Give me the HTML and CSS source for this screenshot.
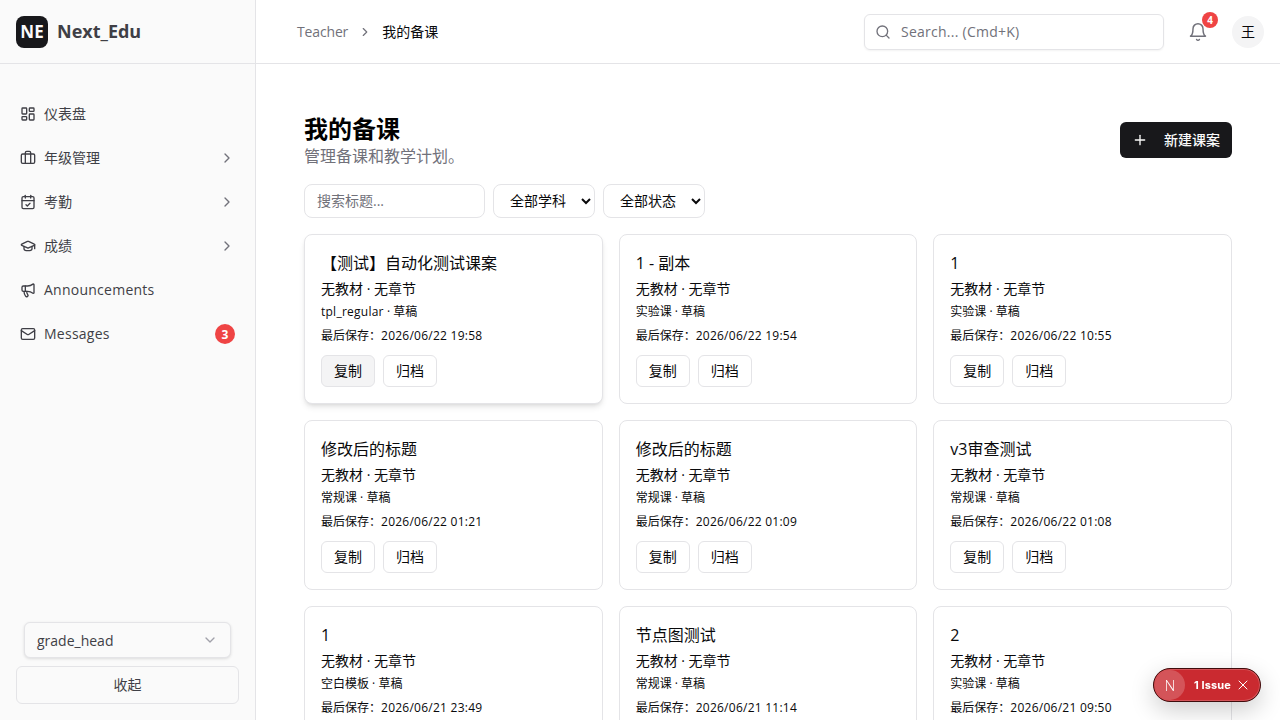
FILE: index.html
```html
<!DOCTYPE html>
<html lang="zh-CN">
<head>
  <meta charset="UTF-8" />
  <title>Next_Edu</title>
  <link rel="stylesheet" href="styles.css">
</head>
<body>
  <!-- Sidebar -->
  <aside class="sidebar">
    <div class="brand">
      <span class="brand-logo">NE</span>
      <span class="brand-name">Next_Edu</span>
    </div>
    <nav class="side-nav">
      <a class="nav-item" href="#">
        <svg class="icon" viewBox="0 0 24 24"><rect x="3" y="3" width="7" height="9" rx="1"/><rect x="14" y="3" width="7" height="5" rx="1"/><rect x="14" y="12" width="7" height="9" rx="1"/><rect x="3" y="16" width="7" height="5" rx="1"/></svg>
        <span class="nav-label">仪表盘</span>
      </a>
      <a class="nav-item" href="#">
        <svg class="icon" viewBox="0 0 24 24"><path d="M16 20V4a2 2 0 0 0-2-2h-4a2 2 0 0 0-2 2v16"/><rect x="2" y="6" width="20" height="14" rx="2"/></svg>
        <span class="nav-label">年级管理</span>
        <svg class="icon chevron" viewBox="0 0 24 24"><path d="m9 18 6-6-6-6"/></svg>
      </a>
      <a class="nav-item" href="#">
        <svg class="icon" viewBox="0 0 24 24"><path d="M8 2v4"/><path d="M16 2v4"/><rect x="3" y="4" width="18" height="18" rx="2"/><path d="M3 10h18"/><path d="m9 16 2 2 4-4"/></svg>
        <span class="nav-label">考勤</span>
        <svg class="icon chevron" viewBox="0 0 24 24"><path d="m9 18 6-6-6-6"/></svg>
      </a>
      <a class="nav-item" href="#">
        <svg class="icon" viewBox="0 0 24 24"><path d="M21.42 10.92a1 1 0 0 0-.02-1.84L12.83 5.18a2 2 0 0 0-1.66 0L2.6 9.08a1 1 0 0 0 0 1.83l8.57 3.91a2 2 0 0 0 1.66 0z"/><path d="M22 10v6"/><path d="M6 12.5V16a6 3 0 0 0 12 0v-3.5"/></svg>
        <span class="nav-label">成绩</span>
        <svg class="icon chevron" viewBox="0 0 24 24"><path d="m9 18 6-6-6-6"/></svg>
      </a>
      <a class="nav-item" href="#">
        <svg class="icon" viewBox="0 0 24 24"><path d="M11 6a13 13 0 0 0 8.4-2.8A1 1 0 0 1 21 4v12a1 1 0 0 1-1.6.8A13 13 0 0 0 11 14H5a2 2 0 0 1-2-2V8a2 2 0 0 1 2-2z"/><path d="M6 14a12 12 0 0 0 2.4 7.2 2 2 0 0 0 3.2-2.4A8 8 0 0 1 10 14"/><path d="M8 6v8"/></svg>
        <span class="nav-label latin">Announcements</span>
      </a>
      <a class="nav-item" href="#">
        <svg class="icon" viewBox="0 0 24 24"><rect x="2" y="4" width="20" height="16" rx="2"/><path d="m22 7-8.97 5.7a1.94 1.94 0 0 1-2.06 0L2 7"/></svg>
        <span class="nav-label latin">Messages</span>
        <span class="nav-badge">3</span>
      </a>
    </nav>
    <div class="side-foot">
      <div class="role-select">
        <span>grade_head</span>
        <svg class="icon role-arrow" viewBox="0 0 24 24"><path d="m6 9 6 6 6-6"/></svg>
      </div>
      <button class="collapse-btn">收起</button>
    </div>
  </aside>

  <div class="main">
    <!-- Top bar -->
    <header class="topbar">
      <div class="crumbs">
        <span class="crumb-parent">Teacher</span>
        <svg class="icon crumb-sep" viewBox="0 0 24 24"><path d="m9 18 6-6-6-6"/></svg>
        <span class="crumb-current">我的备课</span>
      </div>
      <div class="top-search">
        <svg class="icon" viewBox="0 0 24 24"><circle cx="11" cy="11" r="8"/><path d="m21 21-4.3-4.3"/></svg>
        <span class="latin">Search... (Cmd+K)</span>
      </div>
      <div class="bell">
        <svg class="icon bell-icon" viewBox="0 0 24 24"><path d="M6 8a6 6 0 0 1 12 0c0 7 3 9 3 9H3s3-2 3-9"/><path d="M10.3 21a1.94 1.94 0 0 0 3.4 0"/></svg>
        <span class="bell-badge">4</span>
      </div>
      <div class="avatar">王</div>
    </header>

    <!-- Page content -->
    <main class="content">
      <div class="page-head">
        <div>
          <h1>我的备课</h1>
          <p class="subtitle">管理备课和教学计划。</p>
        </div>
        <button class="new-btn">
          <svg class="icon" viewBox="0 0 24 24"><path d="M5 12h14"/><path d="M12 5v14"/></svg>
          <span>新建课案</span>
        </button>
      </div>

      <div class="filters">
        <input class="filter-input" type="text" placeholder="搜索标题...">
        <select class="filter-select"><option>全部学科</option></select>
        <select class="filter-select"><option>全部状态</option></select>
      </div>

      <div class="card-grid">
        <div class="card card-hover">
          <h3>【测试】自动化测试课案</h3>
          <p class="meta">无教材 · 无章节</p>
          <p class="kind"><span class="latin">tpl_regular</span> · 草稿</p>
          <p class="saved">最后保存：<span class="latin">2026/06/22 19:58</span></p>
          <div class="actions"><button class="btn btn-hover">复制</button><button class="btn">归档</button></div>
        </div>
        <div class="card">
          <h3>1 - 副本</h3>
          <p class="meta">无教材 · 无章节</p>
          <p class="kind">实验课 · 草稿</p>
          <p class="saved">最后保存：<span class="latin">2026/06/22 19:54</span></p>
          <div class="actions"><button class="btn">复制</button><button class="btn">归档</button></div>
        </div>
        <div class="card">
          <h3>1</h3>
          <p class="meta">无教材 · 无章节</p>
          <p class="kind">实验课 · 草稿</p>
          <p class="saved">最后保存：<span class="latin">2026/06/22 10:55</span></p>
          <div class="actions"><button class="btn">复制</button><button class="btn">归档</button></div>
        </div>
        <div class="card">
          <h3>修改后的标题</h3>
          <p class="meta">无教材 · 无章节</p>
          <p class="kind">常规课 · 草稿</p>
          <p class="saved">最后保存：<span class="latin">2026/06/22 01:21</span></p>
          <div class="actions"><button class="btn">复制</button><button class="btn">归档</button></div>
        </div>
        <div class="card">
          <h3>修改后的标题</h3>
          <p class="meta">无教材 · 无章节</p>
          <p class="kind">常规课 · 草稿</p>
          <p class="saved">最后保存：<span class="latin">2026/06/22 01:09</span></p>
          <div class="actions"><button class="btn">复制</button><button class="btn">归档</button></div>
        </div>
        <div class="card">
          <h3>v3审查测试</h3>
          <p class="meta">无教材 · 无章节</p>
          <p class="kind">常规课 · 草稿</p>
          <p class="saved">最后保存：<span class="latin">2026/06/22 01:08</span></p>
          <div class="actions"><button class="btn">复制</button><button class="btn">归档</button></div>
        </div>
        <div class="card">
          <h3>1</h3>
          <p class="meta">无教材 · 无章节</p>
          <p class="kind">空白模板 · 草稿</p>
          <p class="saved">最后保存：<span class="latin">2026/06/21 23:49</span></p>
          <div class="actions"><button class="btn">复制</button><button class="btn">归档</button></div>
        </div>
        <div class="card">
          <h3>节点图测试</h3>
          <p class="meta">无教材 · 无章节</p>
          <p class="kind">常规课 · 草稿</p>
          <p class="saved">最后保存：<span class="latin">2026/06/21 11:14</span></p>
          <div class="actions"><button class="btn">复制</button><button class="btn">归档</button></div>
        </div>
        <div class="card">
          <h3>2</h3>
          <p class="meta">无教材 · 无章节</p>
          <p class="kind">实验课 · 草稿</p>
          <p class="saved">最后保存：<span class="latin">2026/06/21 09:50</span></p>
          <div class="actions"><button class="btn">复制</button><button class="btn">归档</button></div>
        </div>
      </div>
    </main>
  </div>

  <!-- Dev overlay pill -->
  <div class="issue-pill">
    <span class="issue-logo">N</span>
    <span class="issue-text">1 Issue</span>
    <svg class="icon issue-close" viewBox="0 0 24 24"><path d="M18 6 6 18"/><path d="m6 6 12 12"/></svg>
  </div>
</body>
</html>
```

FILE: styles.css
```css
/* Reset and base */
* {
  margin: 0;
  padding: 0;
  box-sizing: border-box;
}
html, body {
  height: 100%;
  overflow: hidden;
}
body {
  display: flex;
  font-family: "Open Sans", "Noto Sans CJK SC", sans-serif;
  font-size: 14px;
  color: #09090b;
  background-color: #fff;
}
button, input, select {
  font-family: inherit;
}
.icon {
  width: 16px;
  height: 16px;
  flex-shrink: 0;
  fill: none;
  stroke: currentColor;
  stroke-width: 2;
  stroke-linecap: round;
  stroke-linejoin: round;
}
.latin {
  letter-spacing: 0.25px;
}

/* Sidebar */
.sidebar {
  width: 256px;
  flex-shrink: 0;
  height: 100%;
  display: flex;
  flex-direction: column;
  background-color: #fafafa;
  border-right: 1px solid #e4e4e7;
}
.brand {
  height: 64px;
  display: flex;
  align-items: center;
  gap: 9px;
  padding: 0 16px;
  border-bottom: 1px solid #e4e4e7;
}
.brand-logo {
  width: 32px;
  height: 32px;
  display: flex;
  align-items: center;
  justify-content: center;
  border-radius: 8px;
  background-color: #18181b;
  color: #fafafa;
  font-size: 17px;
  font-weight: 700;
}
.brand-name {
  padding-bottom: 2px;
  font-size: 18px;
  font-weight: 700;
  color: #3f3f46;
}
.side-nav {
  flex: 1;
  padding: 29px 16px 0;
  display: flex;
  flex-direction: column;
  gap: 4px;
}
.nav-item {
  height: 40px;
  display: flex;
  align-items: center;
  gap: 8px;
  padding: 0 4px;
  color: #3f3f46;
  text-decoration: none;
}
.nav-item .icon,
.nav-badge {
  margin-top: 2px;
}
.nav-label {
  flex: 1;
}
.chevron {
  color: #71717a;
}
.nav-badge {
  width: 20px;
  height: 20px;
  border-radius: 50%;
  display: flex;
  align-items: center;
  justify-content: center;
  background-color: #ef4444;
  color: #fff;
  font-size: 12px;
  font-weight: 700;
}
.side-foot {
  padding: 0 16px 16px;
  display: flex;
  flex-direction: column;
  gap: 8px;
}
.role-select {
  height: 36px;
  margin: 0 8px;
  padding: 0 12px;
  display: flex;
  align-items: center;
  justify-content: space-between;
  border: 1px solid #e4e4e7;
  border-radius: 6px;
  background-color: #fafafa;
  box-shadow: 0 1px 3px rgba(0, 0, 0, 0.12);
  color: #3f3f46;
}
.role-arrow {
  color: #a1a1aa;
}
.collapse-btn {
  height: 38px;
  padding-bottom: 2px;
  border: 1px solid #e4e4e7;
  border-radius: 6px;
  background-color: #fafafa;
  color: #3f3f46;
  font-size: 14px;
}

/* Main column */
.main {
  flex: 1;
  min-width: 0;
  height: 100%;
  display: flex;
  flex-direction: column;
}
.topbar {
  height: 64px;
  flex-shrink: 0;
  display: flex;
  align-items: center;
  padding: 0 16px 0 41px;
  border-bottom: 1px solid #e4e4e7;
}
.crumbs {
  flex: 1;
  display: flex;
  align-items: center;
  gap: 10px;
}
.crumb-parent {
  color: #71717a;
  letter-spacing: -0.15px;
}
.crumb-sep {
  color: #71717a;
  width: 14px;
  height: 14px;
}
.crumb-current {
  padding-bottom: 2px;
}
.top-search {
  width: 300px;
  height: 36px;
  display: flex;
  align-items: center;
  gap: 10px;
  padding: 0 10px;
  border: 1px solid #e4e4e7;
  border-radius: 6px;
  box-shadow: 0 1px 2px rgba(0, 0, 0, 0.05);
  color: #71717a;
}
.bell {
  position: relative;
  margin-left: 24px;
  width: 20px;
  height: 20px;
  color: #71717a;
}
.bell-icon {
  width: 20px;
  height: 20px;
  stroke-width: 1.75;
}
.bell-badge {
  position: absolute;
  top: -10px;
  right: -10px;
  width: 16px;
  height: 16px;
  border-radius: 50%;
  display: flex;
  align-items: center;
  justify-content: center;
  background-color: #ef4444;
  color: #fff;
  font-size: 10px;
  font-weight: 700;
}
.avatar {
  width: 32px;
  height: 32px;
  margin-left: 24px;
  padding-bottom: 2px;
  border-radius: 50%;
  display: flex;
  align-items: center;
  justify-content: center;
  background-color: #f4f4f5;
  font-size: 14px;
}

/* Page content */
.content {
  flex: 1;
  overflow: hidden;
  padding: 48px;
}
.page-head {
  display: flex;
  align-items: center;
  justify-content: space-between;
}
h1 {
  padding-top: 1px;
  margin-bottom: -1px;
  font-size: 24px;
  line-height: 32px;
  font-weight: 700;
  color: #000;
}
.subtitle {
  font-size: 16px;
  line-height: 24px;
  color: #71717a;
}
.new-btn {
  height: 36px;
  width: 112px;
  display: flex;
  align-items: center;
  justify-content: space-between;
  padding: 0 12px 2px;
  border: none;
  border-radius: 6px;
  background-color: #18181b;
  color: #fafafa;
  font-size: 14px;
  font-weight: 500;
}
.new-btn .icon {
  margin-top: 2px;
}
.filters {
  margin-top: 16px;
  display: flex;
  gap: 8px;
}
.filter-input {
  width: 181px;
  height: 34px;
  padding: 0 12px 2px;
  border: 1px solid #e4e4e7;
  border-radius: 8px;
  font-size: 14px;
  outline: none;
}
.filter-input::placeholder {
  color: #71717a;
}
.filter-select {
  width: 102px;
  height: 34px;
  padding: 0 12px 2px;
  border: 1px solid #e4e4e7;
  border-radius: 8px;
  background-color: #fff;
  font-size: 14px;
  color: #09090b;
}

/* Lesson cards */
.card-grid {
  margin-top: 16px;
  display: grid;
  grid-template-columns: repeat(3, 1fr);
  gap: 16px;
}
.card {
  height: 170px;
  padding: 16px;
  border: 1px solid #e4e4e7;
  border-radius: 8px;
  background-color: #fff;
}
.card-hover {
  box-shadow: 0 4px 6px -1px rgba(0, 0, 0, 0.1), 0 2px 4px -2px rgba(0, 0, 0, 0.1);
}
.card h3 {
  font-size: 16px;
  line-height: 24px;
  font-weight: 400;
}
.meta {
  margin-top: 4px;
  font-size: 14px;
  line-height: 20px;
}
.kind {
  margin-top: 3px;
  font-size: 12px;
  line-height: 20px;
}
.saved {
  margin-top: 4px;
  font-size: 12px;
  line-height: 20px;
}
.actions {
  margin-top: 9px;
  display: flex;
  gap: 8px;
}
.btn {
  width: 54px;
  height: 32px;
  padding-bottom: 2px;
  border: 1px solid #e4e4e7;
  border-radius: 6px;
  background-color: #fff;
  color: #09090b;
  font-size: 14px;
}
.btn-hover {
  background-color: #f4f4f5;
}

/* Issue pill */
.issue-pill {
  position: fixed;
  left: 1153px;
  top: 668px;
  width: 108px;
  height: 34px;
  display: flex;
  align-items: center;
  padding-left: 1px;
  border: 1px solid #3f0d0d;
  border-radius: 17px;
  background-color: #ca2a30;
  color: #fff;
  box-shadow: inset 0 0 0 1px rgba(255, 255, 255, 0.2), 0 8px 24px rgba(0, 0, 0, 0.2);
}
.issue-logo {
  width: 30px;
  height: 30px;
  border-radius: 50%;
  display: flex;
  align-items: center;
  justify-content: center;
  background-color: rgba(255, 255, 255, 0.2);
  font-size: 15px;
  font-weight: 300;
}
.issue-text {
  margin-left: 9px;
  font-family: "Inter", sans-serif;
  font-size: 11px;
  font-weight: 700;
  letter-spacing: 0.1px;
}
.issue-close {
  width: 16px;
  height: 16px;
  margin-left: 4px;
  stroke-width: 1.5;
}
```
